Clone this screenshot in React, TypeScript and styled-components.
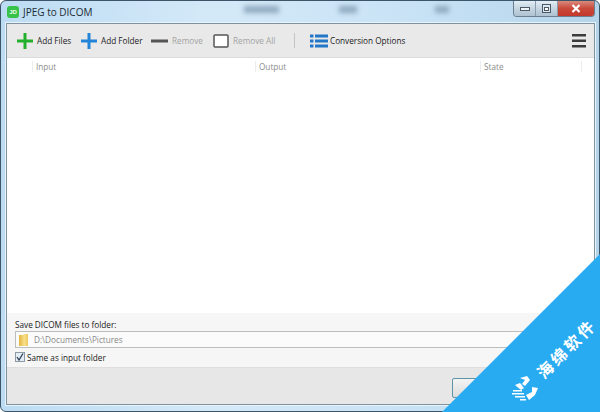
import styled, { createGlobalStyle } from "styled-components";

const GlobalStyle = createGlobalStyle`
  html, body { margin: 0; padding: 0; background: #fff; }
  body { font-family: "Open Sans", "Liberation Sans", sans-serif; }
`;

const Page = styled.div`
  position: relative;
  width: 600px;
  height: 412px;
  overflow: hidden;
`;

const Win = styled.div`
  width: 600px;
  height: 412px;
  box-sizing: border-box;
  display: flex;
  flex-direction: column;
  border: 1px solid #3d5568;
  border-radius: 6px 6px 0 6px;
  background: linear-gradient(90deg, #bcdcf3 0%, #d4e9f8 35%, #c8e2f5 70%, #b4d4ea 100%);
`;

const TitleBar = styled.div`
  height: 22px;
  flex: none;
  display: flex;
  align-items: flex-start;
  padding-left: 6px;
`;

const AppIcon = styled.div`
  width: 12px;
  height: 12px;
  margin-top: 5px;
  border-radius: 3px;
  background: #37c24a;
  color: #eaffea;
  font: bold 6px "Liberation Sans", sans-serif;
  line-height: 12px;
  text-align: center;
`;

const Title = styled.div`
  margin: 3px 0 0 4px;
  width: 206px;
  font-size: 10px;
  line-height: 16px;
  color: #1d2a33;
`;

const Smudge = styled.div<{ $w: number; $gap: number }>`
  width: ${(p) => p.$w}px;
  height: 7px;
  margin: 5px 0 0 ${(p) => p.$gap}px;
  background: #8fa9bf;
  filter: blur(2.5px);
`;

const WinButtons = styled.div`
  margin-left: auto;
  margin-right: 4px;
  display: flex;
  height: 15px;
  border: 1px solid #6b7f90;
  border-top: none;
  border-radius: 0 0 4px 4px;
  overflow: hidden;
`;

const WinBtn = styled.div<{ $w: number; $close?: boolean }>`
  width: ${(p) => p.$w}px;
  display: flex;
  align-items: center;
  justify-content: center;
  border-right: ${(p) => (p.$close ? "none" : "1px solid #8a9cab")};
  background: ${(p) =>
    p.$close
      ? "linear-gradient(#d98a7e, #c9493a 50%, #c2392c)"
      : "linear-gradient(#e3edf4, #c5d5e1 50%, #aec2d1)"};
`;

const Client = styled.div`
  flex: 1;
  min-height: 0;
  margin: 0 4px 6px 5px;
  border: 1px solid #7f929f;
  box-shadow: 0 0 0 1px #e8f3fb;
  display: flex;
  flex-direction: column;
  background: #fff;
`;

const Toolbar = styled.div`
  height: 33px;
  flex: none;
  display: flex;
  align-items: center;
  background: #e9e9e9;
  border-bottom: 1px solid #dcdcdc;
  padding-left: 10px;
  font-size: 8.2px;
`;

const ToolBtn = styled.div<{ $w: number; $gap: number; $off?: boolean }>`
  width: ${(p) => p.$w}px;
  display: flex;
  align-items: center;
  gap: ${(p) => p.$gap}px;
  color: ${(p) => (p.$off ? "#a3a3a3" : "#222")};
  white-space: nowrap;
`;

const Sep = styled.div`
  width: 1px;
  height: 15px;
  background: #c4c4c4;
  margin-right: 15px;
`;

const Burger = styled.div`
  margin-left: auto;
  margin-right: 8px;
  display: flex;
`;

const HeaderRow = styled.div`
  height: 18px;
  flex: none;
  display: grid;
  grid-template-columns: 25px 223px 225px 101px 1fr;
  font-size: 8.2px;
  color: #8c8c8c;
`;

const HeadCell = styled.div`
  padding-left: 3px;
  border-left: 1px solid #ececec;
  height: 11px;
  line-height: 11px;
  margin-top: 3px;
`;

const List = styled.div`
  flex: 1;
  background: #fff;
`;

const SavePanel = styled.div`
  height: 55px;
  flex: none;
  box-sizing: border-box;
  background: #f6f6f6;
  border-bottom: 1px solid #dedede;
  padding: 6px 0 0 8px;
  font-size: 8.2px;
  color: #222;
`;

const SaveLabel = styled.div`
  line-height: 11px;
`;

const PathBox = styled.div`
  margin-top: 1px;
  height: 15px;
  display: flex;
  align-items: center;
  gap: 6px;
  padding-left: 3px;
  border: 1px solid #bdbdbd;
  background: #fbfbfb;
  color: #888;
  font-size: 8.2px;
`;

const CheckRow = styled.div`
  margin-top: 3px;
  display: flex;
  align-items: center;
  gap: 2px;
  height: 12px;
`;

const CheckBox = styled.div`
  width: 8px;
  height: 8px;
  border: 1px solid #8e9aa6;
  background: #e4ecf4;
  display: flex;
  align-items: center;
  justify-content: center;
`;

const Footer = styled.div`
  flex: none;
  height: 36px;
  background: #e7e7e7;
  display: flex;
  align-items: flex-start;
  justify-content: flex-end;
`;

const OkButton = styled.div`
  width: 140px;
  height: 18px;
  margin-top: 10px;
  border: 1px solid #5f93a8;
  border-radius: 2px;
  background: linear-gradient(#f4f4f4, #dcdcdc);
`;

const Ribbon = styled.div`
  position: absolute;
  inset: 0;
  background: #29abf2;
  clip-path: polygon(100% 254px, 100% 100%, 442px 100%);
`;

const RibbonText = styled.div`
  position: absolute;
  left: 521px;
  top: 336px;
  width: 90px;
  text-align: center;
  transform: rotate(-45deg);
  color: #fff;
  font: bold 16px/24px "Noto Sans CJK SC", sans-serif;
  letter-spacing: 3px;
  white-space: nowrap;
`;

const RibbonLogo = styled.svg`
  position: absolute;
  left: 512px;
  top: 376px;
`;

function Plus({ color }: { color: string }) {
  return (
    <svg width="16" height="16" viewBox="0 0 16 16">
      <rect x="0" y="6.5" width="16" height="3" fill={color} />
      <rect x="6.5" y="0" width="3" height="16" fill={color} />
    </svg>
  );
}

export default function App() {
  return (
    <Page>
      <GlobalStyle />
      <Win>
        <TitleBar>
          <AppIcon>JD</AppIcon>
          <Title>JPEG to DICOM</Title>
          <Smudge $w={35} $gap={15} />
          <Smudge $w={18} $gap={60} />
          <Smudge $w={14} $gap={78} />
          <WinButtons>
            <WinBtn $w={21}>
              <svg width="10" height="4">
                <rect x="0.5" y="0.5" width="9" height="3" fill="#eef3f7" stroke="#4b5a66" />
              </svg>
            </WinBtn>
            <WinBtn $w={21}>
              <svg width="9" height="9">
                <rect x="0.5" y="0.5" width="8" height="8" fill="#dbe6ee" stroke="#4b5a66" />
                <rect x="2.5" y="3.5" width="4" height="3" fill="#fff" stroke="#4b5a66" />
              </svg>
            </WinBtn>
            <WinBtn $w={36} $close>
              <svg width="10" height="9">
                <path d="M1.5 1 L8.5 8 M8.5 1 L1.5 8" stroke="#fff" strokeWidth="2.2" />
              </svg>
            </WinBtn>
          </WinButtons>
        </TitleBar>
        <Client>
          <Toolbar>
            <ToolBtn $w={64} $gap={4}>
              <Plus color="#22b02c" />
              Add Files
            </ToolBtn>
            <ToolBtn $w={70} $gap={4}>
              <Plus color="#2384d8" />
              Add Folder
            </ToolBtn>
            <ToolBtn $w={62} $gap={4} $off>
              <svg width="17" height="4">
                <rect width="17" height="3" y="0.5" fill="#555" />
              </svg>
              Remove
            </ToolBtn>
            <ToolBtn $w={81} $gap={4} $off>
              <svg width="16" height="14">
                <rect x="1" y="1" width="14" height="12" rx="1" fill="#fff" stroke="#555" strokeWidth="1.5" />
              </svg>
              Remove All
            </ToolBtn>
            <Sep />
            <ToolBtn $w={110} $gap={2}>
              <svg width="18" height="14" viewBox="0 0 18 14">
                <g fill="#2277c7">
                  <rect x="0" y="0.5" width="3.5" height="3" />
                  <rect x="5" y="0.5" width="13" height="3" />
                  <rect x="0" y="5.5" width="3.5" height="3" />
                  <rect x="5" y="5.5" width="13" height="3" />
                  <rect x="0" y="10.5" width="3.5" height="3" />
                  <rect x="5" y="10.5" width="13" height="3" />
                </g>
              </svg>
              Conversion Options
            </ToolBtn>
            <Burger>
              <svg width="14" height="14" viewBox="0 0 14 14">
                <g fill="#3c3c3c">
                  <rect y="0" width="14" height="2.5" />
                  <rect y="5.5" width="14" height="2.5" />
                  <rect y="11" width="14" height="2.5" />
                </g>
              </svg>
            </Burger>
          </Toolbar>
          <HeaderRow>
            <span />
            <HeadCell>Input</HeadCell>
            <HeadCell>Output</HeadCell>
            <HeadCell>State</HeadCell>
            <HeadCell />
          </HeaderRow>
          <List />
          <SavePanel>
            <SaveLabel>Save DICOM files to folder:</SaveLabel>
            <PathBox>
              <svg width="9" height="12" viewBox="0 0 9 12">
                <defs>
                  <linearGradient id="folderFill" x1="0" x2="1" y1="0" y2="0">
                    <stop offset="0" stopColor="#e2b53c" />
                    <stop offset="0.6" stopColor="#f7e08c" />
                    <stop offset="1" stopColor="#eec95a" />
                  </linearGradient>
                </defs>
                <path d="M0 1 H4 L5 0 H9 V12 H0 Z" fill="url(#folderFill)" />
              </svg>
              D:\Documents\Pictures
            </PathBox>
            <CheckRow>
              <CheckBox>
                <svg width="8" height="8">
                  <path d="M1 4 L3 7 L7 0.5" fill="none" stroke="#2d3f55" strokeWidth="1.3" />
                </svg>
              </CheckBox>
              Same as input folder
            </CheckRow>
          </SavePanel>
          <Footer>
            <OkButton />
          </Footer>
        </Client>
      </Win>
      <Ribbon />
      <RibbonText>海绵软件</RibbonText>
      <RibbonLogo width="26" height="25" viewBox="0 0 26 25">
        <g fill="#fff">
          <path d="M8 2 L15 0 L18 4 L13 10 L10 8 L13 4 Z" />
          <path d="M3 9 L8 7 L12 12 L9 14 Z" />
          <path d="M20 11 L26 12 L23 19 L17 24 L14 19 L20 16 Z" />
          <path d="M1 14 H10 V15.5 H1 Z M0 17 H12 V18.5 H0 Z M3 20 H13 V21.5 H3 Z M8 23 H14 V24.5 H8 Z" />
        </g>
      </RibbonLogo>
    </Page>
  );
}
